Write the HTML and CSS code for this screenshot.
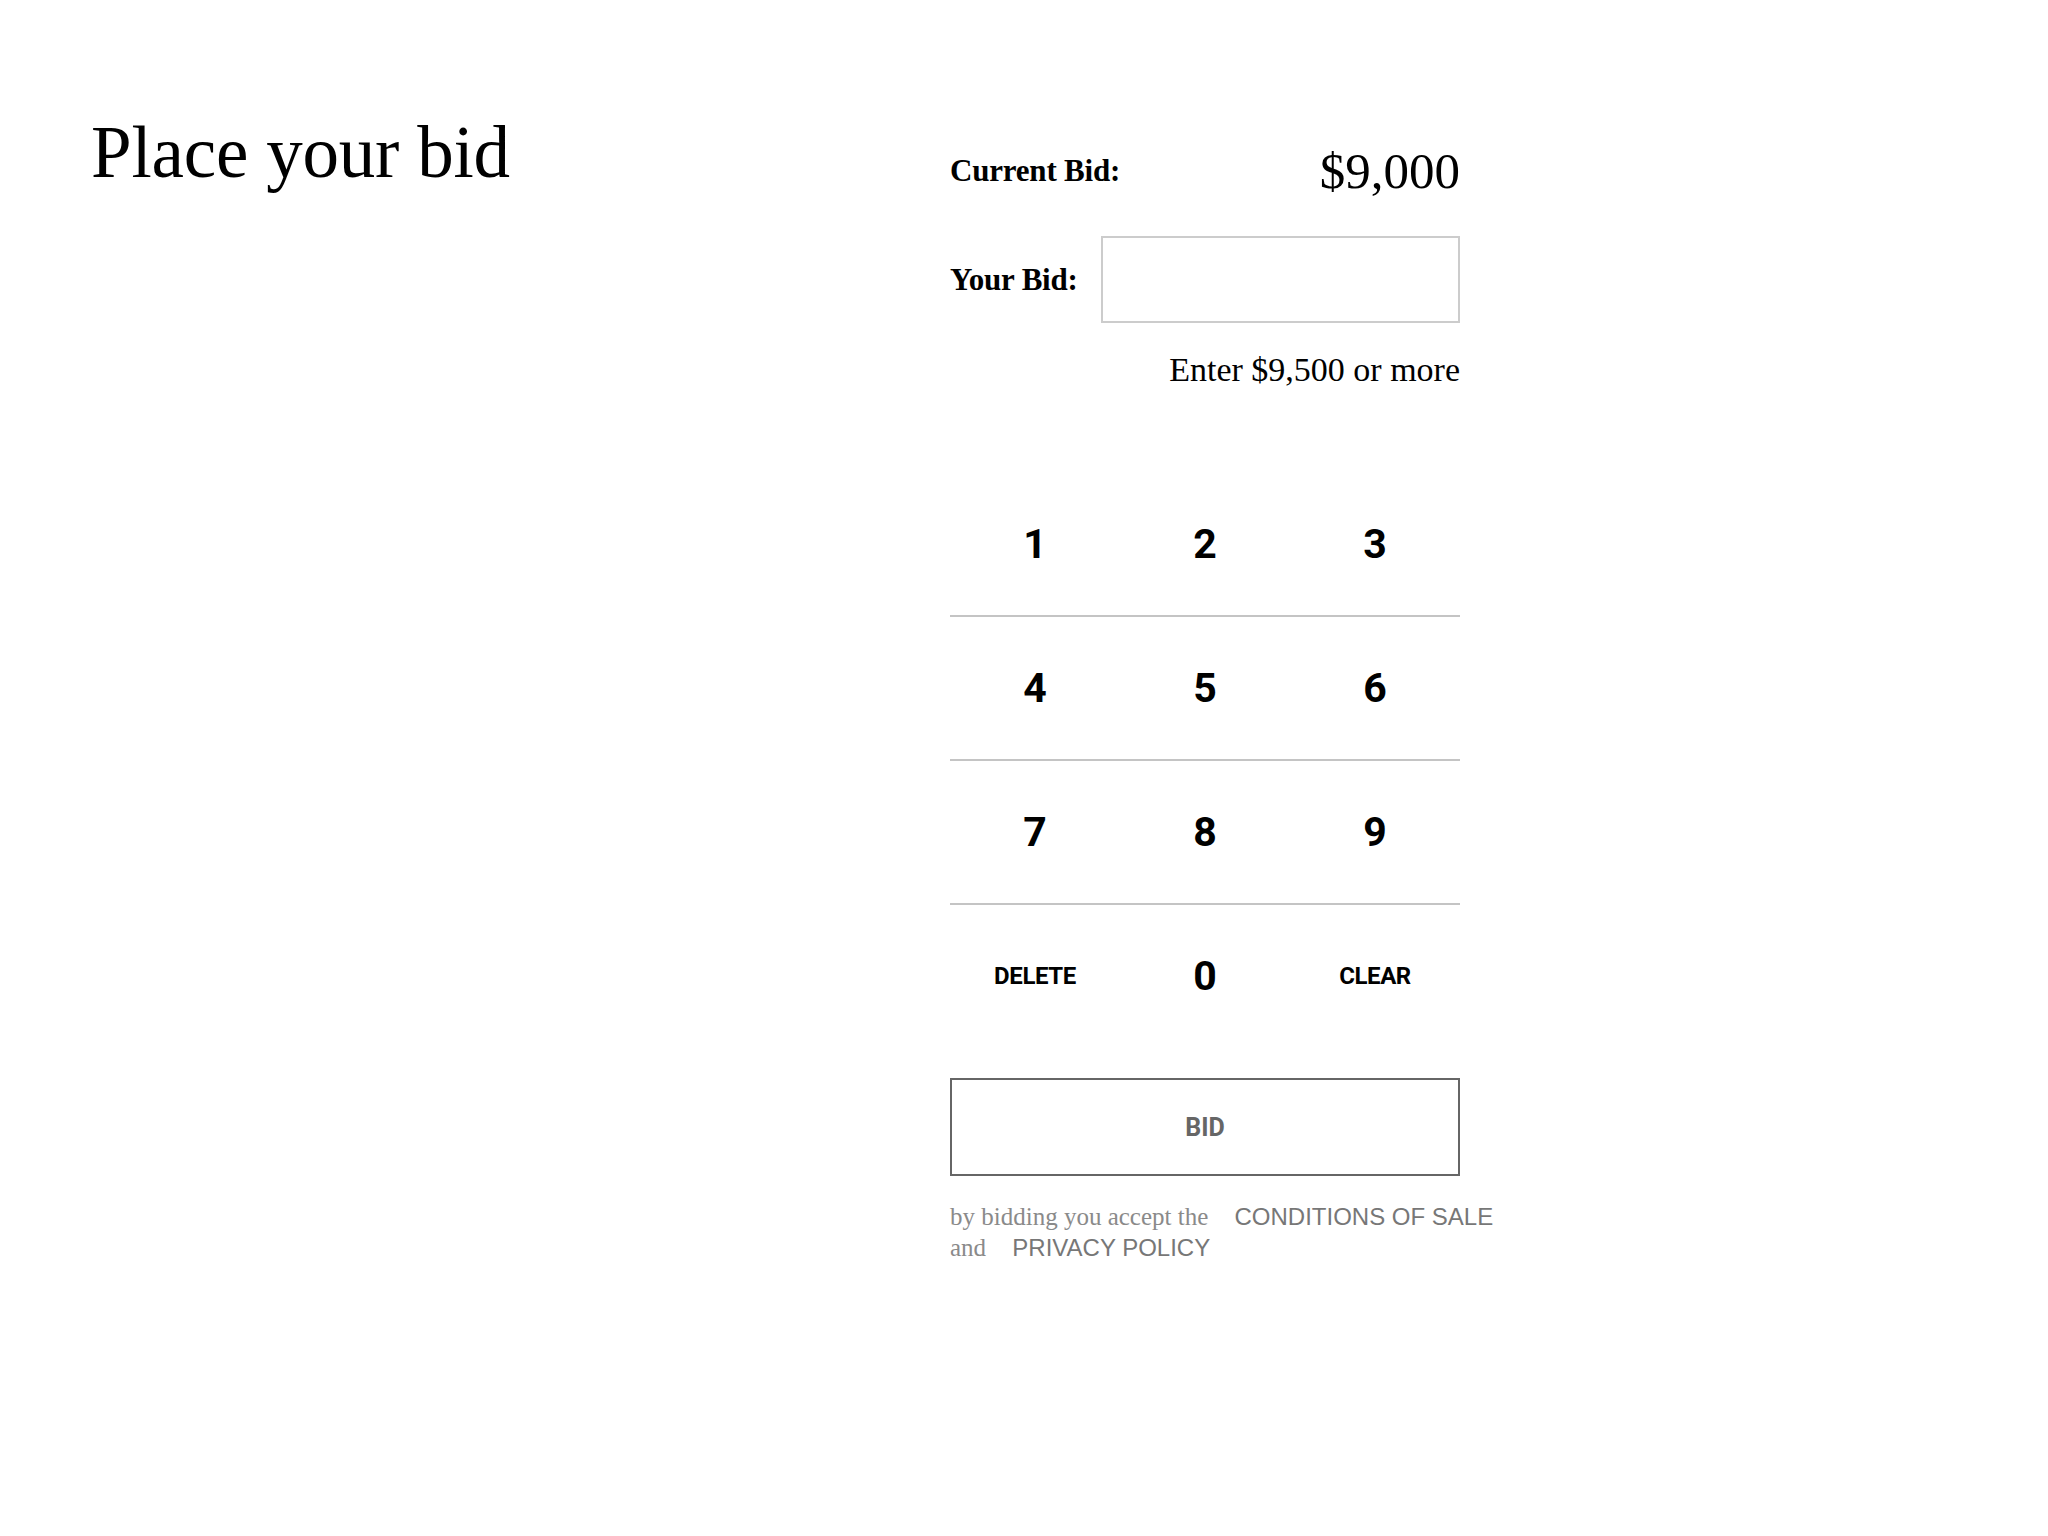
FILE: index.html
```html
<!DOCTYPE html>
<html lang="en">
<head>
<meta charset="utf-8">
<title>Place your bid</title>
<link rel="stylesheet" href="styles.css">
</head>
<body>
<main class="page">
  <section class="title-col">
    <h1 class="title">Place your bid</h1>
  </section>
  <section class="bid-col">
    <div class="row current">
      <span class="label">Current Bid:</span>
      <span class="amount">$9,000</span>
    </div>
    <div class="row yours">
      <label class="label" for="bid">Your Bid:</label>
      <input id="bid" class="bid-input" type="text" value="">
    </div>
    <p class="hint">Enter $9,500 or more</p>

    <div class="keypad">
      <div class="key-row">
        <button class="key">1</button>
        <button class="key">2</button>
        <button class="key">3</button>
      </div>
      <div class="key-row">
        <button class="key">4</button>
        <button class="key">5</button>
        <button class="key">6</button>
      </div>
      <div class="key-row">
        <button class="key">7</button>
        <button class="key">8</button>
        <button class="key">9</button>
      </div>
      <div class="key-row last">
        <button class="key word">DELETE</button>
        <button class="key">0</button>
        <button class="key word">CLEAR</button>
      </div>
    </div>

    <button class="bid-btn">BID</button>

    <p class="terms">by bidding you accept the <a class="link" href="#">CONDITIONS OF SALE</a><br>and <a class="link" href="#">PRIVACY POLICY</a></p>
  </section>
</main>
</body>
</html>
```

FILE: styles.css
```css
* { box-sizing: border-box; }

html, body {
  margin: 0;
  padding: 0;
  background: #ffffff;
  color: #000000;
  font-family: "Liberation Serif", "Times New Roman", serif;
}

.page {
  display: flex;
  align-items: flex-start;
  padding-left: 91px;
  min-height: 1536px;
}

.title-col {
  width: 859px;
  flex: none;
}

.title {
  margin: 116px 0 0;
  font-size: 73px;
  line-height: 1;
  font-weight: 400;
  letter-spacing: -0.2px;
}

.bid-col {
  width: 510px;
  flex: none;
  padding-top: 144px;
}

.row {
  display: flex;
  align-items: center;
  justify-content: space-between;
}

.label {
  font-size: 31px;
  line-height: 1;
  font-weight: 700;
  letter-spacing: -0.2px;
}

.amount {
  font-size: 51px;
  line-height: 1;
  padding-top: 2px;
}

.yours {
  margin-top: 39px;
}

.bid-input {
  width: 359px;
  height: 87px;
  border: 2px solid #cccccc;
  background: #fff;
  padding: 0 16px;
  font: 32px "Liberation Serif", serif;
  outline: none;
}

.hint {
  margin: 30px 0 0 0;
  text-align: right;
  font-size: 34px;
  line-height: 1;
}

.keypad {
  margin-top: 86px;
}

.key-row {
  display: grid;
  grid-template-columns: repeat(3, 1fr);
  height: 144px;
  border-bottom: 2px solid #c4c4c4;
}

.key-row.last {
  border-bottom: 0;
  height: 142px;
}

.key {
  display: flex;
  align-items: center;
  justify-content: center;
  background: none;
  border: 0;
  padding: 0;
  margin: 0;
  color: #000;
  font-family: "Roboto", "Liberation Sans", sans-serif;
  font-weight: 700;
  font-size: 41px;
  line-height: 1;
  cursor: pointer;
}

.key.word {
  font-size: 24px;
  letter-spacing: -0.4px;
}

.bid-btn {
  display: block;
  width: 100%;
  height: 98px;
  margin-top: 31px;
  background: #fff;
  border: 2px solid #666666;
  color: #666666;
  font-family: "Roboto", "Liberation Sans", sans-serif;
  font-weight: 700;
  font-size: 25px;
  line-height: 1;
  cursor: pointer;
}

.terms {
  margin: 25px 0 0;
  width: 600px;
  font-size: 25px;
  line-height: 31px;
  color: #8a8a8a;
}

.link {
  margin-left: 20px;
  font-family: "Liberation Sans", Arial, sans-serif;
  font-size: 24px;
  color: #777777;
  text-decoration: none;
  white-space: nowrap;
}
```
